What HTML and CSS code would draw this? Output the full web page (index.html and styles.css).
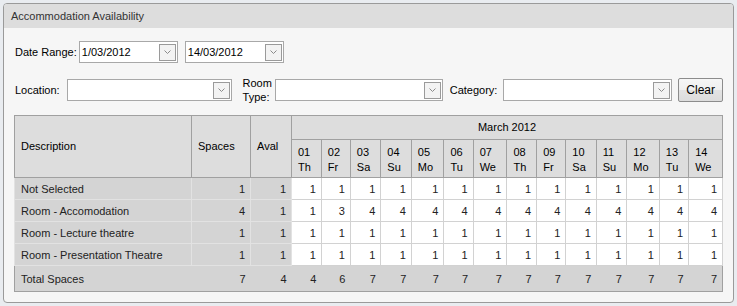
FILE: index.html
```html
<!DOCTYPE html>
<html lang="en">
<head>
    <meta charset="UTF-8">
    <title>Accommodation Availability</title>
    <link rel="stylesheet" href="styles.css">
</head>
<body>

    <div class="panel">
        <div class="panel-header">Accommodation Availability</div>
        <div class="panel-body">

            <div class="filter-row">
                <span class="label label-date">Date Range:</span>
                <div class="combo combo-date">
                    <span class="combo-text">1/03/2012</span>
                    <span class="combo-btn"><svg width="7" height="4" viewBox="0 0 7 4"><path d="M0.5 0.5 L3.5 3.5 L6.5 0.5" fill="none" stroke="#8a8a8a" stroke-width="1"/></svg></span>
                </div>
                <div class="combo combo-date">
                    <span class="combo-text">14/03/2012</span>
                    <span class="combo-btn"><svg width="7" height="4" viewBox="0 0 7 4"><path d="M0.5 0.5 L3.5 3.5 L6.5 0.5" fill="none" stroke="#8a8a8a" stroke-width="1"/></svg></span>
                </div>
            </div>

            <div class="filter-row filter-row-2">
                <span class="label label-loc">Location:</span>
                <div class="combo combo-location">
                    <span class="combo-text"></span>
                    <span class="combo-btn"><svg width="7" height="4" viewBox="0 0 7 4"><path d="M0.5 0.5 L3.5 3.5 L6.5 0.5" fill="none" stroke="#8a8a8a" stroke-width="1"/></svg></span>
                </div>
                <span class="label label-two">Room<br>Type:</span>
                <div class="combo combo-room">
                    <span class="combo-text"></span>
                    <span class="combo-btn"><svg width="7" height="4" viewBox="0 0 7 4"><path d="M0.5 0.5 L3.5 3.5 L6.5 0.5" fill="none" stroke="#8a8a8a" stroke-width="1"/></svg></span>
                </div>
                <span class="label label-cat">Category:</span>
                <div class="combo combo-cat">
                    <span class="combo-text"></span>
                    <span class="combo-btn"><svg width="7" height="4" viewBox="0 0 7 4"><path d="M0.5 0.5 L3.5 3.5 L6.5 0.5" fill="none" stroke="#8a8a8a" stroke-width="1"/></svg></span>
                </div>
                <button class="clear-btn">Clear</button>
            </div>

            <table class="avail">
                <thead>
                    <tr>
                        <th rowspan="2" class="col-desc">Description</th>
                        <th rowspan="2" class="col-spaces">Spaces</th>
                        <th rowspan="2" class="col-aval">Aval</th>
                        <th colspan="14" class="month">March 2012</th>
                    </tr>
                    <tr class="days">
                        <th>01<br>Th</th>
                        <th>02<br>Fr</th>
                        <th>03<br>Sa</th>
                        <th>04<br>Su</th>
                        <th>05<br>Mo</th>
                        <th>06<br>Tu</th>
                        <th>07<br>We</th>
                        <th>08<br>Th</th>
                        <th>09<br>Fr</th>
                        <th>10<br>Sa</th>
                        <th>11<br>Su</th>
                        <th>12<br>Mo</th>
                        <th>13<br>Tu</th>
                        <th>14<br>We</th>
                    </tr>
                </thead>
                <tbody id="rows"></tbody>
                <tfoot>
                    <tr class="total">
                        <td class="desc">Total Spaces</td>
                        <td class="num">7</td>
                        <td class="num">4</td>
                        <td class="num">4</td>
                        <td class="num">6</td>
                        <td class="num">7</td>
                        <td class="num">7</td>
                        <td class="num">7</td>
                        <td class="num">7</td>
                        <td class="num">7</td>
                        <td class="num">7</td>
                        <td class="num">7</td>
                        <td class="num">7</td>
                        <td class="num">7</td>
                        <td class="num">7</td>
                        <td class="num">7</td>
                        <td class="num">7</td>
                    </tr>
                </tfoot>
            </table>

        </div>
    </div>

    <script>
        // Rows of the availability grid
        const rows = [
            { name: 'Not Selected', spaces: 1, aval: 1, days: [1,1,1,1,1,1,1,1,1,1,1,1,1,1] },
            { name: 'Room - Accomodation', spaces: 4, aval: 1, days: [1,3,4,4,4,4,4,4,4,4,4,4,4,4] },
            { name: 'Room - Lecture theatre', spaces: 1, aval: 1, days: [1,1,1,1,1,1,1,1,1,1,1,1,1,1] },
            { name: 'Room - Presentation Theatre', spaces: 1, aval: 1, days: [1,1,1,1,1,1,1,1,1,1,1,1,1,1] }
        ];

        const tbody = document.getElementById('rows');
        rows.forEach(r => {
            let html = '<td class="desc">' + r.name + '</td>' +
                       '<td class="num info">' + r.spaces + '</td>' +
                       '<td class="num info">' + r.aval + '</td>';
            r.days.forEach(d => {
                html += '<td class="num day">' + d + '</td>';
            });
            const tr = document.createElement('tr');
            tr.innerHTML = html;
            tbody.appendChild(tr);
        });
    </script>

</body>
</html>
```

FILE: styles.css
```css
* {
    box-sizing: border-box;
    margin: 0;
    padding: 0;
}

body {
    font-family: 'Liberation Sans', Arial, sans-serif;
    font-size: 11px;
    color: #000000;
    background-color: #e9ecf0;
    padding: 3px 4px 0 3px;
}

.panel {
    width: 731px;
    height: 300px;
    border: 1px solid #9a9a9a;
    border-radius: 4px;
    background-color: #f6f6f6;
    overflow: hidden;
}

.panel-header {
    height: 24px;
    line-height: 25px;
    padding-left: 7px;
    background-color: #dddddd;
    color: #333333;
}

.panel-body {
    padding: 13px 10px 0 10px;
}

.filter-row {
    display: flex;
    align-items: center;
    height: 22px;
}

.filter-row-2 {
    margin-top: 15px;
    height: 24px;
}

.label {
    padding-left: 1px;
    margin-right: 6px;
    white-space: nowrap;
}

.label-date {
    margin-right: 2px;
}

.label-loc {
    margin-right: 7px;
}

.label-two {
    line-height: 14px;
    margin-left: 11px;
    margin-right: 3px;
    padding-left: 0;
}

.label-cat {
    margin-left: 7px;
    margin-right: 6px;
    padding-left: 0;
}

.combo {
    display: flex;
    align-items: center;
    justify-content: space-between;
    height: 22px;
    background-color: #ffffff;
    border: 1px solid #a8a8a8;
    padding: 0 1px 0 2px;
}

.combo-date {
    width: 99px;
    margin-right: 7px;
}

.combo-location {
    width: 166px;
}

.combo-room {
    width: 169px;
}

.combo-cat {
    width: 170px;
}

.combo-text {
    line-height: 18px;
}

.combo-btn {
    display: flex;
    align-items: center;
    justify-content: center;
    width: 17px;
    height: 17px;
    border: 1px solid #9a9a9a;
    background-color: #f3f3f3;
}

.clear-btn {
    width: 45px;
    height: 24px;
    margin-left: 6px;
    font-family: 'Liberation Sans', Arial, sans-serif;
    font-size: 12px;
    color: #000000;
    border: 1px solid #8c8c8c;
    border-radius: 2px;
    background: linear-gradient(#f6f6f6 0%, #efefef 50%, #e3e3e3 51%, #dcdcdc 100%);
}

.avail {
    margin-top: 13px;
    width: 709px;
    border-collapse: collapse;
    border: 1px solid #a0a0a0;
}

.avail th {
    background-color: #dddddd;
    border: 1px solid #a0a0a0;
    font-weight: normal;
    text-align: left;
    padding: 0 6px;
    line-height: 15px;
}

.avail .col-desc {
    width: 177px;
}

.avail .col-spaces {
    width: 59px;
}

.avail .col-aval {
    width: 41px;
}

.avail .month {
    height: 24px;
    text-align: center;
}

.avail .days th {
    height: 38px;
    padding-top: 2px;
}

.avail td {
    height: 22px;
    padding: 0 6px;
    background-color: #d4d4d4;
    border: 1px solid #e2e2e2;
    color: #222222;
}

.avail td.num {
    text-align: right;
    padding-right: 5px;
}

.avail td.day {
    background-color: #ffffff;
    border: 1px solid #d2d2d2;
}

.avail .total td {
    height: 26px;
    border: none;
    border-top: 1px solid #e2e2e2;
    background-color: #d4d4d4;
}
```
